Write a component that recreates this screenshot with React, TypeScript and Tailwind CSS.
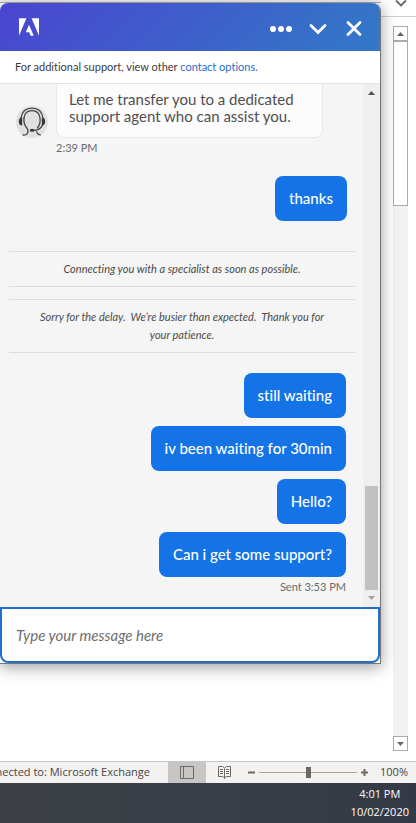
import { clsx } from "clsx";

type SystemNoteProps = {
  text: string;
};

type SentBubbleProps = {
  text: string;
};

const followUps = [
  "still waiting",
  "iv been waiting for 30min",
  "Hello?",
  "Can i get some support?",
];

const AdobeMark = () => (
  <svg width="20" height="18" viewBox="0 1.376 24 21.248" fill="currentColor">
    <path d="M13.966 22.624l-1.69-4.281H8.122l3.892-9.144 5.662 13.425zM8.884 1.376H0v21.248zm6.232 0H24v21.248z" />
  </svg>
);

const AgentAvatar = () => (
  <svg className="size-8 shrink-0" viewBox="0 0 32 32" fill="none">
    <circle cx="16" cy="16" r="16" fill="#e0e0e0" />
    <g stroke="#454545" strokeWidth="1.3" strokeLinecap="round">
      <path d="M5 12C6 5.500 10.500 2.200 16 2.200S26 5.500 27 12" />
      <path d="M8 12C8.500 7.500 11.500 4.700 16 4.700S23.500 7.500 24 12c.5 4-.5 7.500-2.500 9.800" />
      <path d="M8 12c-.5 4.500.5 7.500 3 10.200 1.500 2 1.200 5.200-.8 6.300-1.200.5-2.500.8-3.200.4" />
      <path d="M26.500 19c-1.500 3.500-4.500 5.500-9.500 5.500" />
      <path d="M20.800 26c.2 1.600 1.500 2.600 3.500 2.900" />
    </g>
    <path d="M2.800 15.500c0-2.800 1.200-3.800 3.400-4v8c-2.200-.2-3.400-1.200-3.400-4zM29.200 15.500c0-2.800-1.200-3.800-3.400-4v8c2.200-.2 3.400-1.200 3.400-4z" fill="#383838" />
    <ellipse cx="16" cy="24.300" rx="2.300" ry="1.500" fill="#383838" />
  </svg>
);

const Arrow = ({ down, className }: { down?: boolean; className: string }) => (
  <svg
    className={clsx(className, down && "rotate-180")}
    width="7"
    height="4"
    viewBox="0 0 7 4"
    fill="currentColor"
  >
    <path d="M3.500 0L7 4H0z" />
  </svg>
);

const SystemNote = ({ text }: SystemNoteProps) => (
  <p className="border-y border-[#dcdde0] px-6 py-2 text-center text-[11px] leading-[18px] whitespace-pre-wrap text-[#4b4b4b] italic">
    {text}
  </p>
);

const SentBubble = ({ text }: SentBubbleProps) => (
  <p className="rounded-lg bg-[#1473e6] px-3.5 py-3 text-[15px] leading-[21px] font-medium text-white">
    {text}
  </p>
);

const ChatHeader = () => (
  <header className="flex h-12 items-center justify-between rounded-t-lg bg-linear-[135deg] from-[#4a45cf] to-[#3279c7] pr-[17px] pl-[19px] text-white">
    <AdobeMark />
    <div className="flex items-center gap-4">
      <button type="button" aria-label="More options">
        <svg width="24" height="16" viewBox="0 0 24 16" fill="currentColor">
          <circle cx="4" cy="10" r="3" />
          <circle cx="12" cy="10" r="3" />
          <circle cx="20" cy="10" r="3" />
        </svg>
      </button>
      <button type="button" aria-label="Minimize">
        <svg width="18" height="16" viewBox="0 0 18 16" fill="none" stroke="currentColor" strokeWidth="2.800" strokeLinecap="round">
          <path d="M2 6.500l7 7 7-7" />
        </svg>
      </button>
      <button type="button" aria-label="Close" className="ml-0.5">
        <svg width="18" height="18" viewBox="0 0 18 18" fill="none" stroke="currentColor" strokeWidth="2.800" strokeLinecap="round">
          <path d="M3 4.500l12 12M15 4.500l-12 12" />
        </svg>
      </button>
    </div>
  </header>
);

const ChatLog = () => (
  <div className="flex border-t border-[#e4e4e4] bg-[#f5f5f5]">
    <div className="flex min-w-0 flex-1 flex-col pr-2 pb-3 pl-[9px]">
      {/* Agent message */}
      <div className="flex items-end gap-2 pl-[7px]">
        <AgentAvatar />
        <p className="mr-8 flex-1 rounded-b-lg border border-t-0 border-[#e8e8e8] bg-[#fcfcfc] px-3 pt-[7px] pb-3 text-[15px] leading-[17px] text-[#505050]">
          Let me transfer you to a dedicated support agent who can assist you.
        </p>
      </div>
      <time className="mt-0.5 pl-[47px] text-[11px] leading-4 text-[#6a6a6a]">
        2:39 PM
      </time>

      <div className="mt-5 flex flex-col items-end pr-2">
        <SentBubble text="thanks" />
      </div>

      <div className="mt-[30px] flex flex-col gap-3">
        <SystemNote text="Connecting you with a specialist as soon as possible." />
        <SystemNote text="Sorry for the delay.  We’re busier than expected.  Thank you for your patience." />
      </div>

      <div className="mt-5 flex flex-col items-end gap-2 pr-[9px]">
        {followUps.map((text) => (
          <SentBubble key={text} text={text} />
        ))}
      </div>
      <time className="mt-0.5 pr-[9px] text-right text-[11px] leading-4 text-[#6a6a6a]">
        Sent 3:53 PM
      </time>
    </div>

    {/* Log scrollbar */}
    <div className="flex w-[17px] flex-col items-center bg-[#efefef] py-[7px]">
      <Arrow className="text-[#505050]" />
      <div className="flex-1" />
      <div className="mb-1.5 h-[104px] w-[13px] bg-[#c1c1c1]" />
      <Arrow down className="text-[#a3a3a3]" />
    </div>
  </div>
);

const ChatPanel = () => (
  <section className="relative rounded-t-lg border-r border-b border-[#777] bg-white font-['Lato',sans-serif] shadow-[0_3px_16px_rgba(0,0,0,0.4)] [font-variant-ligatures:none]">
    <ChatHeader />
    <p className="px-[15px] py-2 text-[11px] leading-4 text-[#3c3c3c]">
      For additional support, view other{" "}
      <a href="#contact" className="text-[#2a6bcb]">
        contact options.
      </a>
    </p>
    <ChatLog />
    <input
      type="text"
      aria-label="Message"
      placeholder="Type your message here"
      className="block h-14 w-full rounded-b-lg border-2 border-[#1f70cc] bg-white px-3.5 text-[15px] outline-none placeholder:text-[#6e6e6e] placeholder:italic"
    />
  </section>
);

const WindowScrollbar = () => (
  <div className="flex w-[35px] flex-col">
    <div className="flex h-[17px] justify-center border-b border-[#d0d0d0] pl-1 text-[#666]">
      <svg width="12" height="8" viewBox="0 0 12 8" fill="none" stroke="currentColor" strokeWidth="1.800">
        <path d="M1 0.500l5 5 5-5" />
      </svg>
    </div>
    <div className="mt-[9px] mr-2 mb-2.5 ml-3 flex flex-1 flex-col bg-[#f1f1f1] text-[#666]">
      <button type="button" aria-label="Scroll up" className="grid h-[15px] place-items-center border border-[#ababab] bg-white">
        <Arrow className="block" />
      </button>
      <div className="h-[165px] border border-[#ababab] bg-white" />
      <div className="flex-1" />
      <button type="button" aria-label="Scroll down" className="grid h-[15px] place-items-center border border-[#ababab] bg-white">
        <Arrow down className="block" />
      </button>
    </div>
  </div>
);

const StatusBar = () => (
  <div className="flex h-[22px] items-center border-t border-[#c6c6c6] bg-[#f3f2f1] font-['Open_Sans',sans-serif] text-[11px] text-[#484644]">
    <div className="flex w-[150px] shrink-0 justify-end whitespace-nowrap">
      nected to: Microsoft Exchange
    </div>
    <button type="button" aria-label="Normal view" className="ml-[18px] grid h-full w-[38px] shrink-0 place-items-center bg-[#c8c6c4]">
      <svg width="14" height="13" viewBox="0 0 14 13" fill="none" stroke="#6b6967">
        <path d="M.5.5h13v12H.5zM3.500.5v12" />
      </svg>
    </button>
    <button type="button" aria-label="Reading view" className="ml-3 shrink-0">
      <svg width="13" height="13" viewBox="0 0 13 13" fill="none" stroke="#6b6967">
        <path d="M6.500 2.500v10M.5.500h4l2 1.500 2-1.500h4v10h-4l-2 1.500-2-1.500h-4zM2 3.500h3M2 5.500h3M2 7.500h3M8 3.500h3M8 5.500h3M8 7.500h3" />
      </svg>
    </button>
    <div className="ml-[17px] flex min-w-0 flex-1 items-center gap-1 text-[#6b6967]">
      <button type="button" aria-label="Zoom out" className="shrink-0">
        <svg width="7" height="7" viewBox="0 0 7 7" stroke="currentColor" strokeWidth="2">
          <path d="M0 3.500h7" />
        </svg>
      </button>
      <input
        type="range"
        aria-label="Zoom"
        min={0}
        max={100}
        defaultValue={50}
        className="h-3 w-full min-w-0 flex-1 appearance-none bg-transparent [&::-webkit-slider-runnable-track]:h-px [&::-webkit-slider-runnable-track]:bg-[#a8a6a4] [&::-webkit-slider-thumb]:-mt-[5px] [&::-webkit-slider-thumb]:h-[11px] [&::-webkit-slider-thumb]:w-[5px] [&::-webkit-slider-thumb]:appearance-none [&::-webkit-slider-thumb]:bg-[#6b6967]"
      />
      <button type="button" aria-label="Zoom in" className="shrink-0">
        <svg width="7" height="7" viewBox="0 0 7 7" stroke="currentColor" strokeWidth="2">
          <path d="M0 3.500h7M3.500 0v7" />
        </svg>
      </button>
    </div>
    <span className="mr-2 ml-3">100%</span>
  </div>
);

const Taskbar = () => (
  <footer className="flex h-10 justify-end bg-linear-to-r from-[#3d4147] to-[#343a45] pt-0.5 pr-[7px]">
    <div className="text-center font-['Open_Sans',sans-serif] text-[11px] leading-[18px] text-white">
      <div>4:01 PM</div>
      <div>10/02/2020</div>
    </div>
  </footer>
);

export default function App() {
  return (
    <div className="flex min-h-screen flex-col overflow-hidden bg-white">
      <main className="flex flex-1">
        <div className="min-w-0 flex-1">
          <div className="h-[3px] border-b border-[#aaa] bg-[#f3f3f3]" />
          <ChatPanel />
        </div>
        <WindowScrollbar />
      </main>
      <StatusBar />
      <Taskbar />
    </div>
  );
}
